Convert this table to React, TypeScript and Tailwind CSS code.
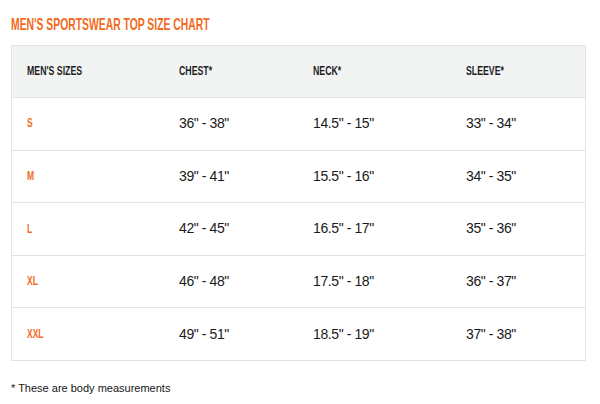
import React from 'react';

const rows = [
  { size: 'S', chest: '36" - 38"', neck: '14.5" - 15"', sleeve: '33" - 34"' },
  { size: 'M', chest: '39" - 41"', neck: '15.5" - 16"', sleeve: '34" - 35"' },
  { size: 'L', chest: '42" - 45"', neck: '16.5" - 17"', sleeve: '35" - 36"' },
  { size: 'XL', chest: '46" - 48"', neck: '17.5" - 18"', sleeve: '36" - 37"' },
  { size: 'XXL', chest: '49" - 51"', neck: '18.5" - 19"', sleeve: '37" - 38"' },
];

// the reference uses a tall condensed face; squeeze Arial bold to match
const Narrow: React.FC<{ children: React.ReactNode; className?: string }> = ({ children, className = 'scale-x-[0.68]' }) => (
  <span className={`inline-block origin-left whitespace-nowrap font-bold ${className}`}>{children}</span>
);

const App: React.FC = () => {
  return (
    <div className="w-[600px] h-[404px] bg-white pl-[11px] pt-[15px] font-['Liberation_Sans',Arial,sans-serif]">
      <h1 className="h-[30px] text-[17px] leading-[20px] text-[#f36a21]">
        <Narrow className="scale-x-[0.61]">MEN'S SPORTSWEAR TOP SIZE CHART</Narrow>
      </h1>

      <div className="w-[575px] border border-[#e3e3e3]">
        <div className="grid grid-cols-[152px_134px_153px_1fr] items-center h-[51px] pl-[15px] bg-[#f2f3f3] text-[12.5px] text-[#1e1e1e]">
          <Narrow className="scale-x-[0.7]">MEN'S SIZES</Narrow>
          <Narrow className="scale-x-[0.7]">CHEST*</Narrow>
          <Narrow className="scale-x-[0.7]">NECK*</Narrow>
          <Narrow className="scale-x-[0.7]">SLEEVE*</Narrow>
        </div>

        {rows.map((row) => (
          <div
            key={row.size}
            className="grid grid-cols-[152px_134px_153px_1fr] items-center h-[52.6px] pl-[15px] border-t border-[#e3e3e3] text-[14px] text-[#1a1a1a] tracking-[-0.4px]"
          >
            <span className="text-[12.5px] text-[#f36a21] tracking-normal">
              <Narrow>{row.size}</Narrow>
            </span>
            <span>{row.chest}</span>
            <span>{row.neck}</span>
            <span>{row.sleeve}</span>
          </div>
        ))}
      </div>

      <p className="mt-[19px] text-[11px] text-[#151515]">* These are body measurements</p>
    </div>
  );
};

export default App;
